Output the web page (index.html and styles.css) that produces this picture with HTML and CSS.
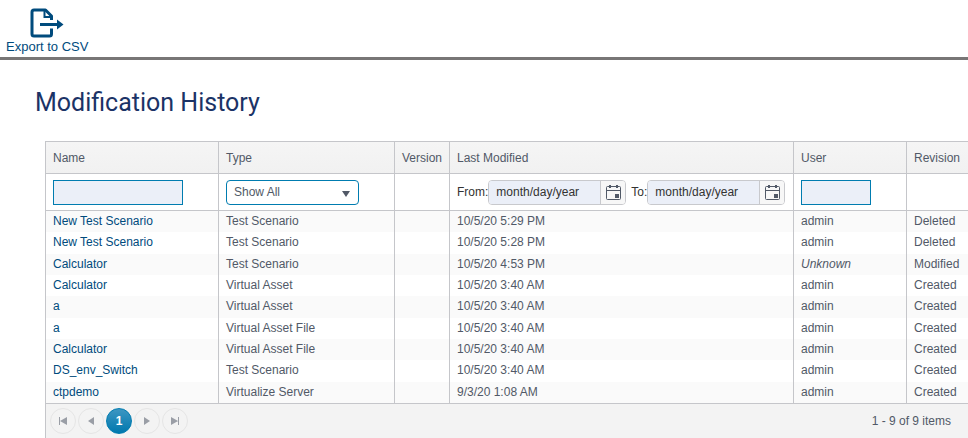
FILE: index.html
```html
<!DOCTYPE html>
<html lang="en">
<head>
<meta charset="utf-8">
<title>Modification History</title>
<link rel="stylesheet" href="styles.css">
</head>
<body>
<header class="toolbar">
  <a class="export" href="#">
    <svg class="export-icon" width="34" height="30" viewBox="0 0 34 30" fill="none" stroke="currentColor" stroke-width="3" aria-hidden="true">
      <path d="M21.500 12V8L15.500 2H4Q2 2 2 4V26Q2 28 4 28H19.500Q21.500 28 21.500 26V20.500" stroke-linejoin="round"/>
      <path d="M14.500 2V9H21.500" stroke-width="2"/>
      <path d="M10 16.500H28"/>
      <path d="M27 11.500L33.500 16.500L27 21.500Z" fill="currentColor" stroke="none"/>
    </svg>
    <span>Export to CSV</span>
  </a>
</header>
<main>
  <h1>Modification History</h1>
  <section class="grid">
    <table>
      <colgroup><col class="c-name"><col class="c-type"><col class="c-version"><col class="c-date"><col class="c-user"><col></colgroup>
      <thead>
        <tr class="heads"><th>Name</th><th>Type</th><th>Version</th><th>Last Modified</th><th>User</th><th>Revision</th></tr>
        <tr class="filters">
          <td><input class="text name" type="text" aria-label="Name"></td>
          <td><div class="select"><select aria-label="Type"><option>Show All</option></select><svg width="8" height="6" viewBox="0 0 8 6" aria-hidden="true"><path d="M0 0H8L4 6Z" fill="#515967"/></svg></div></td>
          <td></td>
          <td>
            <div class="dates">
              <label for="from">From:</label>
              <div class="picker"><input id="from" type="text" value="month/day/year"><button type="button" aria-label="Open from calendar"><svg width="15" height="16" viewBox="0 0 15 16" fill="none" stroke="#515967" aria-hidden="true"><rect x=".5" y="2.500" width="14" height="13" rx="1"/><path d="M1 6.500H14"/><path d="M4 1V4M11 1V4" stroke-width="2"/><path d="M9 10H13V14H9Z" fill="#515967" stroke="none"/></svg></button></div>
              <label class="to" for="to">To:</label>
              <div class="picker"><input id="to" type="text" value="month/day/year"><button type="button" aria-label="Open to calendar"><svg width="15" height="16" viewBox="0 0 15 16" fill="none" stroke="#515967" aria-hidden="true"><rect x=".5" y="2.500" width="14" height="13" rx="1"/><path d="M1 6.500H14"/><path d="M4 1V4M11 1V4" stroke-width="2"/><path d="M9 10H13V14H9Z" fill="#515967" stroke="none"/></svg></button></div>
            </div>
          </td>
          <td><input class="text user" type="text" aria-label="User"></td>
          <td></td>
        </tr>
      </thead>
      <tbody>
        <tr><td><a href="#">New Test Scenario</a></td><td>Test Scenario</td><td></td><td>10/5/20 5:29 PM</td><td>admin</td><td>Deleted</td></tr>
        <tr><td><a href="#">New Test Scenario</a></td><td>Test Scenario</td><td></td><td>10/5/20 5:28 PM</td><td>admin</td><td>Deleted</td></tr>
        <tr><td><a href="#">Calculator</a></td><td>Test Scenario</td><td></td><td>10/5/20 4:53 PM</td><td><em>Unknown</em></td><td>Modified</td></tr>
        <tr><td><a href="#">Calculator</a></td><td>Virtual Asset</td><td></td><td>10/5/20 3:40 AM</td><td>admin</td><td>Created</td></tr>
        <tr><td><a href="#">a</a></td><td>Virtual Asset</td><td></td><td>10/5/20 3:40 AM</td><td>admin</td><td>Created</td></tr>
        <tr><td><a href="#">a</a></td><td>Virtual Asset File</td><td></td><td>10/5/20 3:40 AM</td><td>admin</td><td>Created</td></tr>
        <tr><td><a href="#">Calculator</a></td><td>Virtual Asset File</td><td></td><td>10/5/20 3:40 AM</td><td>admin</td><td>Created</td></tr>
        <tr><td><a href="#">DS_env_Switch</a></td><td>Test Scenario</td><td></td><td>10/5/20 3:40 AM</td><td>admin</td><td>Created</td></tr>
        <tr><td><a href="#">ctpdemo</a></td><td>Virtualize Server</td><td></td><td>9/3/20 1:08 AM</td><td>admin</td><td>Created</td></tr>
      </tbody>
    </table>
    <footer class="pager">
      <nav aria-label="Pages">
        <button type="button" aria-label="First page"><svg width="8" height="8" viewBox="0 0 8 8" aria-hidden="true"><path d="M0 0H1V8H0ZM8 0V8L1 4Z" fill="currentColor"/></svg></button>
        <button type="button" aria-label="Previous page"><svg width="8" height="8" viewBox="0 0 8 8" aria-hidden="true"><path d="M7 0V8L1 4Z" fill="currentColor"/></svg></button>
        <button type="button" class="current" aria-current="page">1</button>
        <button type="button" aria-label="Next page"><svg width="8" height="8" viewBox="0 0 8 8" aria-hidden="true"><path d="M1 0V8L7 4Z" fill="currentColor"/></svg></button>
        <button type="button" aria-label="Last page"><svg width="8" height="8" viewBox="0 0 8 8" aria-hidden="true"><path d="M7 0H8V8H7ZM0 0V8L7 4Z" fill="currentColor"/></svg></button>
      </nav>
      <span>1 - 9 of 9 items</span>
    </footer>
  </section>
</main>
</body>
</html>
```
FILE: styles.css
```css
* { box-sizing: border-box; }

body {
  margin: 0;
  overflow: hidden;
  background: #fff;
  color: #515967;
  font: 12px/16px "Liberation Sans", Arial, sans-serif;
}

a { color: #004b7d; text-decoration: none; }

input, select, button { font: inherit; margin: 0; }

.toolbar {
  display: flex;
  padding: 8px 6px 2px;
  border-bottom: 3px solid #787676;
}

.export {
  display: flex;
  flex-direction: column;
  align-items: center;
  gap: 1px;
  font-size: 13px;
}

.export-icon { display: block; }

h1 {
  margin: 0;
  padding: 27px 35px 22px;
  color: #1b3366;
  font: 400 25px/32px Roboto, sans-serif;
}

.grid {
  margin-left: 45px;
  border: 1px solid #c5c6ca;
  border-width: 1px 0 0 1px;
}

table {
  width: 100%;
  table-layout: fixed;
  border-collapse: separate;
  border-spacing: 0;
}

.c-name { width: 172px; }
.c-type { width: 176px; }
.c-version { width: 55px; }
.c-date { width: 344px; }
.c-user { width: 113px; }

th, td {
  padding: 0 7px;
  border-left: 1px solid #c5c6ca;
  text-align: left;
  font-weight: 400;
  white-space: nowrap;
}

th:first-child, td:first-child { border-left: 0; }

.heads th {
  height: 31px;
  background: linear-gradient(#f5f5f5, #f1f1f1);
}

.filters td {
  height: 38px;
  border-top: 1px solid #c5c6ca;
  border-bottom: 1px solid #c5c6ca;
}

.text, .select select {
  display: block;
  height: 25px;
  border: 1px solid #007cb0;
}

.text { background: #ebeff8; }
.name { width: 130px; }
.user { width: 70px; }

.select { position: relative; width: 133px; }

.select select {
  width: 100%;
  padding: 0 7px 1px;
  border-radius: 4px;
  appearance: none;
  background: #fff;
  color: inherit;
}

.select svg { position: absolute; right: 9px; top: 11px; }

.dates {
  display: flex;
  align-items: center;
  color: #333;
}

.dates label { padding-bottom: 1px; }
.to { margin-left: 5px; }

.picker {
  display: flex;
  flex: none;
  width: 138px;
  height: 25px;
  overflow: hidden;
  border: 1px solid #c8c9cd;
  border-radius: 4px;
}

.picker input {
  flex: 1;
  min-width: 0;
  padding: 0 7px 1px;
  border: 0;
  background: #ebeff8;
  color: #333;
}

.picker button {
  display: grid;
  place-items: center;
  width: 25px;
  padding: 0;
  border: 0;
  border-left: 1px solid #c8c9cd;
  background: #f7f7f7;
}

tbody td { height: 21px; padding-bottom: 2px; }
tbody tr:nth-child(3n+2) td { height: 22px; }
tbody tr:nth-child(odd) { background: #fafafa; }

.pager {
  display: flex;
  justify-content: space-between;
  align-items: center;
  padding: 4px 17px 8px 4px;
  border-top: 1px solid #c5c6ca;
  background: #f3f3f3;
}

.pager nav { display: flex; gap: 2px; }

.pager button {
  display: grid;
  place-items: center;
  width: 26px;
  height: 26px;
  padding: 0;
  border: 1px solid #e5e5e5;
  border-radius: 50%;
  background: none;
  color: #9a9ea6;
}

.pager .current {
  border-color: #007cb0;
  background: linear-gradient(#3d96c2, #0078ae);
  color: #fff;
  font-weight: 700;
}
```
